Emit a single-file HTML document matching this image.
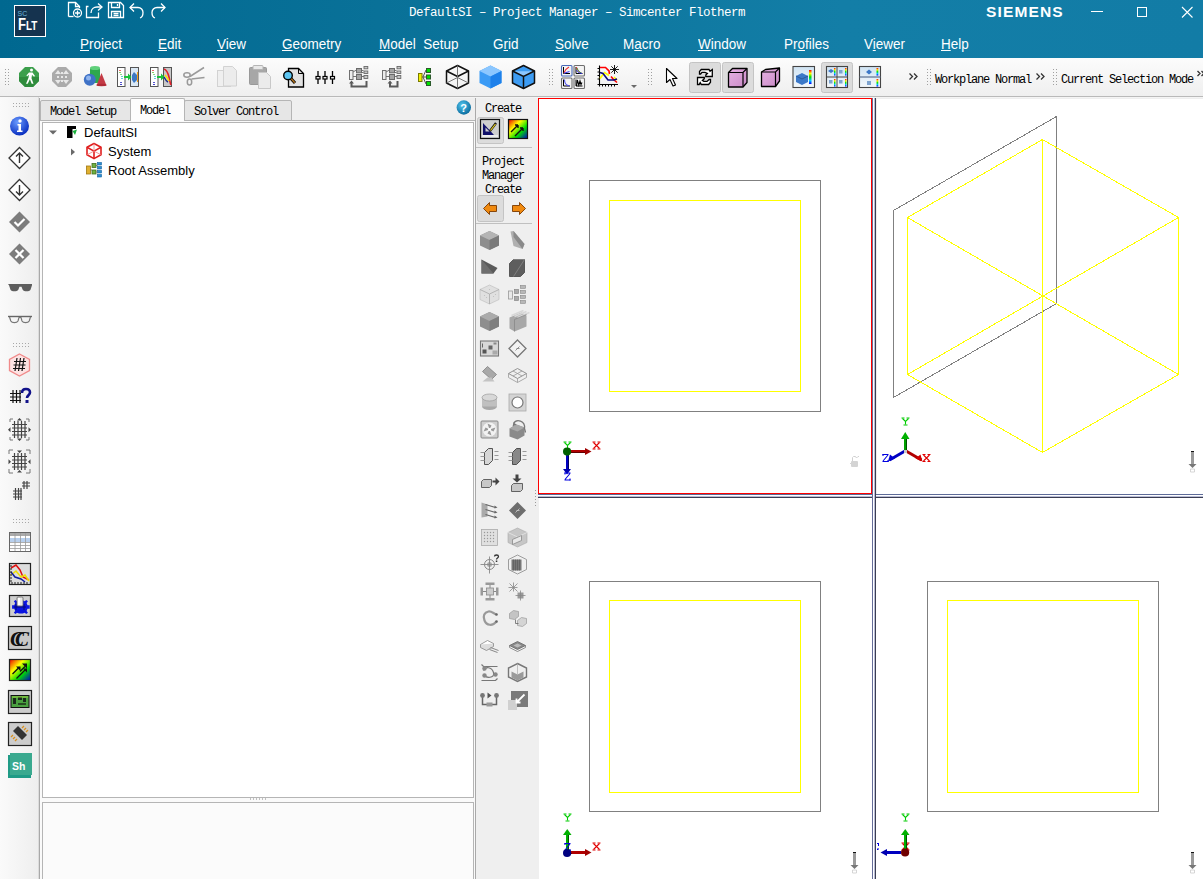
<!DOCTYPE html>
<html><head><meta charset="utf-8">
<style>
*{box-sizing:border-box;margin:0;padding:0}
html,body{width:1203px;height:879px;overflow:hidden;background:#f0f0f0;font-family:"Liberation Sans",sans-serif}
.a{position:absolute}
#title{left:0;top:0;width:1203px;height:58px;background:linear-gradient(90deg,#006890 0%,#0a7299 35%,#137ea7 70%,#127ca6 100%)}
.mono{font-family:"Liberation Mono",monospace}
.menu{color:#fff;font-size:14.5px;top:36px;white-space:nowrap;transform:scaleX(0.93);transform-origin:0 0}
.menu u{text-decoration:underline;text-decoration-thickness:1px;text-underline-offset:1px}
#tb{left:0;top:58px;width:1203px;height:38px;background:linear-gradient(#fcfcfc,#efefef)}
#tbline{left:0;top:96px;width:1203px;height:1px;background:#b9b9b9}
#tbline2{left:0;top:97px;width:1203px;height:1px;background:#f4f4f4}
#lt{left:0;top:97px;width:39px;height:782px;background:linear-gradient(90deg,#fafafa,#eeeeee)}
.vl{background:#a9a9a9}
#vp{left:538px;top:98px;width:665px;height:781px;background:#fff}
.tab{font-size:12px;letter-spacing:-1.2px;color:#000;white-space:nowrap}
.tree{font-size:13px;color:#000;white-space:nowrap}
.ctext{font-size:12px;letter-spacing:-1.2px;color:#000;white-space:nowrap}
</style></head><body>
<div id="title" class="a">
 <div class="a" style="left:14px;top:5px;width:32px;height:32px;border:1px solid #fff;background:#15334f"></div>
 <div class="a" style="left:17.5px;top:10px;font-size:7px;font-weight:normal;color:#6fb9dd;line-height:8px">SC</div>
 <div class="a" style="left:18px;top:17px;font-size:16px;font-weight:bold;color:#fff;line-height:16px;transform:scaleX(0.82);transform-origin:0 0">F<span style="font-size:12px">LT</span></div>
 <svg class="a" style="left:66px;top:0px" width="102" height="20" viewBox="0 0 102 20" fill="none" stroke="#fff" stroke-width="1.3">
  <path d="M2.5 16.5V2.5h7l4 4V8"/><path d="M9.5 2.5v4h4"/><path d="M2.5 16.5h5"/>
  <circle cx="11.5" cy="13" r="4"/><path d="M11.5 10.5v5M9 13h5"/>
  <path d="M22.5 6.5h-2v11h12v-5"/><path d="M25 13c0-4 3-6 6-6h4"/><path d="M32 3.5l4 3.5-4 3.5"/>
  <path d="M42.5 2.5h12l3 3v12h-15z"/><path d="M45.5 2.5v5h8v-5"/><path d="M45.5 17.5v-6h9v6"/><path d="M47.5 13.5h5M47.5 15.5h5"/><path d="M51.5 4v2"/>
  <path d="M64 7.5h8c3 0 5 2.5 5 5 0 3-1.5 5-3 5.5"/><path d="M68 3.5l-4 4 4 4"/>
  <path d="M99 7.5h-8c-3 0-5 2.5-5 5 0 3 1.5 5 3 5.5"/><path d="M95 3.5l4 4-4 4"/>
 </svg>
 <div class="a mono" style="left:409px;top:6px;font-size:12.5px;color:#fff;letter-spacing:-0.5px;white-space:nowrap">DefaultSI &#8211; Project Manager &#8211; Simcenter Flotherm</div>
 <div class="a" style="left:986px;top:4px;font-size:14px;font-weight:bold;color:#fff;letter-spacing:1px;transform:scaleX(1.11);transform-origin:0 0">SIEMENS</div>
 <div class="a" style="left:1091px;top:11px;width:12px;height:1px;background:#fff"></div>
 <div class="a" style="left:1137px;top:7px;width:10px;height:10px;border:1px solid #fff"></div>
 <svg class="a" style="left:1181px;top:6px" width="13" height="13"><path d="M1 1L11.5 11.5M11.5 1L1 11.5" stroke="#fff" stroke-width="1.1"/></svg>
 <div class="a menu" style="left:80px"><u>P</u>roject</div>
 <div class="a menu" style="left:158px"><u>E</u>dit</div>
 <div class="a menu" style="left:217px"><u>V</u>iew</div>
 <div class="a menu" style="left:282px"><u>G</u>eometry</div>
 <div class="a menu" style="left:379px;word-spacing:4px"><u>M</u>odel Setup</div>
 <div class="a menu" style="left:493px">G<u>r</u>id</div>
 <div class="a menu" style="left:555px"><u>S</u>olve</div>
 <div class="a menu" style="left:623px">M<u>a</u>cro</div>
 <div class="a menu" style="left:698px"><u>W</u>indow</div>
 <div class="a menu" style="left:784px">Pr<u>o</u>files</div>
 <div class="a menu" style="left:864px">V<u>i</u>ewer</div>
 <div class="a menu" style="left:941px"><u>H</u>elp</div>
</div>

<div id="tb" class="a"></div>
<svg class="a" style="left:0;top:58px" width="1203" height="38" viewBox="0 58 1203 38">
 <defs>
  <linearGradient id="gcub" x1="0" y1="0" x2="1" y2="1"><stop offset="0" stop-color="#8fc8ff"/><stop offset="1" stop-color="#1e88f0"/></linearGradient>
  <linearGradient id="pink" x1="0" y1="0" x2="1" y2="1"><stop offset="0" stop-color="#e7b2e4"/><stop offset="1" stop-color="#c98ac6"/></linearGradient>
  <linearGradient id="pan" x1="0" y1="0" x2="0" y2="1"><stop offset="0" stop-color="#cfe3f3"/><stop offset="1" stop-color="#f4f8fb"/></linearGradient>
  <linearGradient id="cbar" x1="0" y1="0" x2="0" y2="1"><stop offset="0" stop-color="#f00"/><stop offset="0.25" stop-color="#ff0"/><stop offset="0.5" stop-color="#0d0"/><stop offset="0.75" stop-color="#0cf"/><stop offset="1" stop-color="#00f"/></linearGradient>
 </defs>
 <!-- grips -->
 <rect x="5" y="69" width="1" height="1" fill="#a0a0a0"/><rect x="5" y="72" width="1" height="1" fill="#a0a0a0"/><rect x="5" y="75" width="1" height="1" fill="#a0a0a0"/><rect x="5" y="78" width="1" height="1" fill="#a0a0a0"/><rect x="5" y="81" width="1" height="1" fill="#a0a0a0"/><rect x="5" y="84" width="1" height="1" fill="#a0a0a0"/><rect x="8" y="69" width="1" height="1" fill="#a0a0a0"/><rect x="8" y="72" width="1" height="1" fill="#a0a0a0"/><rect x="8" y="75" width="1" height="1" fill="#a0a0a0"/><rect x="8" y="78" width="1" height="1" fill="#a0a0a0"/><rect x="8" y="81" width="1" height="1" fill="#a0a0a0"/><rect x="8" y="84" width="1" height="1" fill="#a0a0a0"/>
 <rect x="549" y="69" width="1" height="1" fill="#a0a0a0"/><rect x="549" y="72" width="1" height="1" fill="#a0a0a0"/><rect x="549" y="75" width="1" height="1" fill="#a0a0a0"/><rect x="549" y="78" width="1" height="1" fill="#a0a0a0"/><rect x="549" y="81" width="1" height="1" fill="#a0a0a0"/><rect x="549" y="84" width="1" height="1" fill="#a0a0a0"/><rect x="552" y="69" width="1" height="1" fill="#a0a0a0"/><rect x="552" y="72" width="1" height="1" fill="#a0a0a0"/><rect x="552" y="75" width="1" height="1" fill="#a0a0a0"/><rect x="552" y="78" width="1" height="1" fill="#a0a0a0"/><rect x="552" y="81" width="1" height="1" fill="#a0a0a0"/><rect x="552" y="84" width="1" height="1" fill="#a0a0a0"/>
 <rect x="648" y="69" width="1" height="1" fill="#a0a0a0"/><rect x="648" y="72" width="1" height="1" fill="#a0a0a0"/><rect x="648" y="75" width="1" height="1" fill="#a0a0a0"/><rect x="648" y="78" width="1" height="1" fill="#a0a0a0"/><rect x="648" y="81" width="1" height="1" fill="#a0a0a0"/><rect x="648" y="84" width="1" height="1" fill="#a0a0a0"/><rect x="651" y="69" width="1" height="1" fill="#a0a0a0"/><rect x="651" y="72" width="1" height="1" fill="#a0a0a0"/><rect x="651" y="75" width="1" height="1" fill="#a0a0a0"/><rect x="651" y="78" width="1" height="1" fill="#a0a0a0"/><rect x="651" y="81" width="1" height="1" fill="#a0a0a0"/><rect x="651" y="84" width="1" height="1" fill="#a0a0a0"/>
 <!-- 1 green octagon -->
 <path d="M25 67h8l6 6v8l-6 6h-8l-6-6v-8z" fill="#3c9f4c"/>
 <path d="M19 77h20v4l-6 6h-8l-6-6z" fill="#2f8c3d"/>
 <circle cx="31.5" cy="70" r="1.5" fill="#fff"/>
 <path d="M29 72.5h3.5l2.5 3.5-1 .8-2-2-.5 3.5 2 5.5h-1.8l-1.8-4.5-2.2 4.5h-1.7l2.5-6 .5-3-1.8 1.5-.8-.8z" fill="#fff"/>
 <!-- 2 gray octagon -->
 <path d="M58 67h8l6 6v8l-6 6h-8l-6-6v-8z" fill="#ababab"/>
 <path d="M55 74l3-4 3 4zM63 74l3-4 3 4zM55 80l3 4 3-4zM63 80l3 4 3-4z" fill="#e8e8e8"/>
 <rect x="61" y="72" width="2" height="2" fill="#e8e8e8"/><rect x="61" y="76" width="2" height="2" fill="#e8e8e8"/><rect x="57" y="76" width="2" height="2" fill="#e8e8e8"/><rect x="65" y="76" width="2" height="2" fill="#e8e8e8"/><rect x="61" y="80" width="2" height="2" fill="#e8e8e8"/>
 <!-- 3 shapes -->
 <rect x="90" y="67" width="10" height="16" rx="3" fill="#2ea84e"/><ellipse cx="95" cy="68" rx="5" ry="2" fill="#5fd07a"/>
 <circle cx="89.8" cy="79.8" r="6" fill="#3f72c6"/><circle cx="88.5" cy="78" r="2.5" fill="#8fb4ee"/>
 <path d="M101.5 73l5 12.5h-10z" fill="#c43a45"/><ellipse cx="101.5" cy="85" rx="5" ry="1.2" fill="#b02c38"/>
 <!-- 4 panels -->
 <rect x="117.5" y="67.5" width="7.5" height="19" fill="#fff" stroke="#555" stroke-width="1"/>
 <rect x="119" y="70" width="2" height="1" fill="#e66"/><rect x="119" y="72" width="2" height="1" fill="#8c6"/><rect x="120" y="74" width="2" height="1" fill="#8d8"/><rect x="121" y="76" width="2" height="1" fill="#6cc"/><rect x="121" y="78" width="2" height="1" fill="#6cd"/><rect x="120" y="82" width="2" height="1" fill="#55c"/><rect x="120" y="84" width="2" height="1" fill="#44c"/>
 <rect x="130.5" y="67.5" width="8" height="19" fill="#dbe8f4" stroke="#555" stroke-width="1"/>
 <path d="M124 76h4v-2.5l3.5 3.5-3.5 3.5v-2.5h-4z" fill="#19c23a"/>
 <path d="M134 72l3 3v5l-3 3-2-3v-5z" fill="#3d79c4"/><rect x="137" y="72" width="1" height="10" fill="#f0a020"/>
 <!-- 5 -->
 <rect x="150.5" y="67.5" width="7.5" height="19" fill="#fff" stroke="#555" stroke-width="1"/>
 <rect x="152" y="70" width="2" height="1" fill="#e66"/><rect x="152" y="72" width="2" height="1" fill="#8c6"/><rect x="153" y="74" width="2" height="1" fill="#8d8"/><rect x="154" y="76" width="2" height="1" fill="#6cc"/><rect x="154" y="78" width="2" height="1" fill="#6cd"/><rect x="153" y="82" width="2" height="1" fill="#55c"/><rect x="153" y="84" width="2" height="1" fill="#44c"/>
 <rect x="163.5" y="67.5" width="8" height="19" fill="#c8c8c8" stroke="#555" stroke-width="1"/>
 <path d="M157 76h4v-2.5l3.5 3.5-3.5 3.5v-2.5h-4z" fill="#19c23a"/>
 <path d="M164 69c3 1 4 4 5 8s1 6 2 8" stroke="#e0202a" stroke-width="1.6" fill="none"/><path d="M165 75c2 2 3 4 4 6" stroke="#ffe000" stroke-width="1.6" fill="none"/><path d="M164 77c1 2 2 4 4 5" stroke="#1b2a8a" stroke-width="1.4" fill="none"/>
 <!-- 6 scissors -->
 <g fill="none" stroke="#9a9a9a" stroke-width="1.5"><ellipse cx="187" cy="75" rx="3.2" ry="2.2"/><ellipse cx="189.5" cy="82" rx="2.2" ry="3"/><path d="M190 76.5l14-9M191.5 79l13-1.5"/></g>
 <!-- 7 copy -->
 <rect x="217.5" y="70.5" width="13" height="16" fill="#efefef" stroke="#d2d2d2"/><path d="M223.5 66.5h9l4 4v15.5h-13z" fill="#ececec" stroke="#d2d2d2"/>
 <!-- 8 paste -->
 <rect x="249.5" y="67.5" width="17" height="17" rx="1" fill="#a7a7a7" stroke="#999"/><rect x="253" y="65.5" width="10" height="4" rx="1" fill="#e8e8e8" stroke="#b5b5b5"/>
 <path d="M258.5 72.5h8l4 4v12h-12z" fill="#ebebeb" stroke="#c8c8c8"/>
 <!-- 9 magnifier doc -->
 <path d="M288.5 68.5h10l5 5v13.5h-15z" fill="#e2e2e2" stroke="#000" stroke-width="1.3"/><path d="M298.5 68.5v5h5" fill="none" stroke="#000"/>
 <circle cx="288" cy="75.5" r="4.3" fill="#5cc5f2" stroke="#000" stroke-width="1.4"/><path d="M291 78.5l4 4.5" stroke="#000" stroke-width="3"/><path d="M291.3 78.8l3.5 4" stroke="#b0701a" stroke-width="1.4"/>
 <!-- 10 sliders -->
 <g stroke="#000" stroke-width="1.3"><path d="M318 71v13M325 71v13M332.5 71v13"/></g>
 <g fill="#fff" stroke="#000" stroke-width="1.2"><rect x="316" y="76.5" width="4" height="2.5"/><rect x="323" y="76.5" width="4" height="2.5"/><rect x="330.5" y="76.5" width="4" height="2.5"/></g>
 <!-- 11 tree gray -->
 <g transform="translate(0 0)"><rect x="349.5" y="70.5" width="3.5" height="9" fill="#ececec" stroke="#707070"/><path d="M353 76.5h3.5M361.5 76.5h2.5M353 72l3.5-2M361.5 70.5h2M361.5 72.5h2" stroke="#666" stroke-width="0.9"/><rect x="356.5" y="68.5" width="5" height="4.3" fill="#a4a4a4" stroke="#6a6a6a"/><rect x="356.5" y="74.5" width="5" height="5" fill="#a4a4a4" stroke="#6a6a6a"/><rect x="364" y="66.5" width="3.8" height="2.3" fill="#c8c8c8" stroke="#6a6a6a" stroke-width="0.9"/><rect x="364" y="71" width="3.8" height="2.5" fill="#c8c8c8" stroke="#6a6a6a" stroke-width="0.9"/><rect x="364" y="75.5" width="3.8" height="3" fill="#c8c8c8" stroke="#6a6a6a" stroke-width="0.9"/><path d="M351.5 82.5v4h15v-5.5" fill="none" stroke="#5a5a5a" stroke-width="2"/><path d="M349 83.5l2.5-3 2.5 3z" fill="#5a5a5a"/></g>
 <g transform="translate(33 0)"><rect x="349.5" y="70.5" width="3.5" height="9" fill="#ececec" stroke="#707070"/><path d="M353 76.5h3.5M361.5 76.5h2.5M353 72l3.5-2M361.5 70.5h2M361.5 72.5h2" stroke="#666" stroke-width="0.9"/><rect x="356.5" y="68.5" width="5" height="4.3" fill="#a4a4a4" stroke="#6a6a6a"/><rect x="356.5" y="74.5" width="5" height="5" fill="#a4a4a4" stroke="#6a6a6a"/><rect x="364" y="66.5" width="3.8" height="2.3" fill="#c8c8c8" stroke="#6a6a6a" stroke-width="0.9"/><rect x="364" y="71" width="3.8" height="2.5" fill="#c8c8c8" stroke="#6a6a6a" stroke-width="0.9"/><rect x="364" y="75.5" width="3.8" height="3" fill="#c8c8c8" stroke="#6a6a6a" stroke-width="0.9"/><path d="M357 82.5v4h7.5v-5.5" fill="none" stroke="#5a5a5a" stroke-width="2"/><path d="M354.5 83.5l2.5-3 2.5 3z" fill="#5a5a5a"/></g>
 <!-- 12 yellow/green tree -->
 <path d="M422 77h4M423 77l3-7h1M423 77l3 7h1" stroke="#555" fill="none"/>
 <rect x="418.5" y="73.5" width="3.5" height="8" fill="#f3f000" stroke="#7a7a00"/>
 <rect x="426.5" y="68.5" width="4" height="4" fill="#00e000" stroke="#2a5a2a"/><rect x="426.5" y="75" width="4" height="4" fill="#00e000" stroke="#2a5a2a"/><rect x="426.5" y="81.5" width="4" height="4" fill="#00e000" stroke="#2a5a2a"/>
 <!-- 13 wire cube -->
 <g fill="none" stroke="#111" stroke-width="1.5" stroke-linejoin="round"><path d="M457.5 65.5l11 5.5v12l-11 5.5-11-5.5v-12z"/><path d="M446.5 71l11 5.5 11-5.5M457.5 76.5v0"/></g>
 <g fill="none" stroke="#777" stroke-width="1"><path d="M457.5 65.5v23M446.5 83l11-5.5 11 5.5"/></g>
 <!-- 14 blue cube -->
 <path d="M490.5 65.5l11 5.5v12l-11 5.5-11-5.5v-12z" fill="#3b9bf5"/><path d="M479.5 71l11-5.5 11 5.5-11 5.5z" fill="#8cc7ff"/><path d="M490.5 76.5v12l11-5.5v-12z" fill="#1d80ea"/>
 <!-- 15 blue cube black edges -->
 <path d="M523.5 65.5l11 5.5v12l-11 5.5-11-5.5v-12z" fill="#3d9cf3" stroke="#111" stroke-width="1.5" stroke-linejoin="round"/><path d="M513 71.2l10.5 5.3 10.5-5.3" fill="#8cc7ff"/><path d="M512.5 71l11 5.5 11-5.5M523.5 76.5v12" fill="none" stroke="#111" stroke-width="1.5"/>
 <!-- 16 4-plot -->
 <rect x="561.5" y="65.5" width="10.5" height="10.5" rx="1" fill="#f4f4f4" stroke="#4a6ab8" stroke-width="1.1"/><path d="M563.5 67V73.5H570" fill="none" stroke="#000" stroke-width="1"/><rect x="574.0" y="65.5" width="10.5" height="10.5" rx="1" fill="#f4f4f4" stroke="#6e6e6e" stroke-width="1.1"/><path d="M576.0 67V73.5H582.5" fill="none" stroke="#000" stroke-width="1"/><rect x="561.5" y="78.0" width="10.5" height="10.5" rx="1" fill="#f4f4f4" stroke="#6e6e6e" stroke-width="1.1"/><path d="M563.5 79.5V86.0H570" fill="none" stroke="#000" stroke-width="1"/><rect x="574.0" y="78.0" width="10.5" height="10.5" rx="1" fill="#f4f4f4" stroke="#6e6e6e" stroke-width="1.1"/><path d="M576.0 79.5V86.0H582.5" fill="none" stroke="#000" stroke-width="1"/><path d="M564 73c1-3 3-5 5-6" fill="none" stroke="#f03030" stroke-width="1.1"/><path d="M564 73.5c2-.5 3-1.5 5.5-2" fill="none" stroke="#4040f0" stroke-width="1.1"/><path d="M576.5 67c.5 3 2 5 5 6" fill="none" stroke="#e03030" stroke-width="1"/><path d="M577 68c1 2 1.5 4 4.5 5" fill="none" stroke="#30a030" stroke-width="0.9"/><path d="M576.5 70c1 2 2 3 5.5 3.5" fill="none" stroke="#3030e0" stroke-width="1"/><path d="M564.5 79.5c0 4 1 6 5 6.5" fill="none" stroke="#5050f0" stroke-width="1.1"/><path d="M576.5 86l.8-6 1.5 5 1.2-4 1 3.5 1-2" fill="none" stroke="#000" stroke-width="1.1"/>
 <!-- 17 chart star -->
 <g fill="none" stroke-linejoin="miter">
  <path d="M599.5 65.5V86.5M597.5 84.5H618" stroke="#000" stroke-width="1.1"/>
  <path d="M597.5 68.5h2M597.5 72h2M597.5 75.5h2M597.5 79h2M602.5 84.5v2M605.5 84.5v2M608.5 84.5v2M611.5 84.5v2M614.5 84.5v2" stroke="#000" stroke-width="1"/>
  <path d="M600 67.5H605.5L609 71L609.5 74M611 76.5L613.5 79.5L617 82.5" stroke="#ff0000" stroke-width="1.6"/>
  <path d="M600 78.5L604.5 72.5L609 75.5M614 77L617 80" stroke="#ffff00" stroke-width="1.6"/>
  <path d="M600 72.5L603 73.5L608 80H614L617 79" stroke="#0a0a80" stroke-width="1.6"/>
  <path d="M614.5 65v9M610 69.5h9M611.3 66.3l6.4 6.4M617.7 66.3l-6.4 6.4" stroke="#000" stroke-width="0.9"/>
 </g>
 <path d="M631 85h6l-3 3z" fill="#6a6a6a"/>
 <!-- 18 cursor -->
 <path d="M666.5 68.5v14l3.5-3 3 6.5 2.5-1-3-6.5h4.5z" fill="#fff" stroke="#000" stroke-width="1.1" stroke-linejoin="round"/>
 <!-- pressed buttons -->
 <rect x="689.5" y="62.5" width="31" height="30" rx="2" fill="#dcdcdc" stroke="#c4c4c4"/>
 <rect x="722.5" y="62.5" width="31" height="30" rx="2" fill="#dcdcdc" stroke="#c4c4c4"/>
 <rect x="821.5" y="62.5" width="31" height="30" rx="2" fill="#dcdcdc" stroke="#c4c4c4"/>
 <!-- 19 sync -->
 <path d="M699.5 71.5L701.3 69.5H709L710 71.3L712.3 69.5V76.5H705.8V75L707.4 73.4L705 72.3H702L700.6 74H699.5Z" fill="#fff" stroke="#000" stroke-width="1.3" stroke-linejoin="miter"/>
 <path d="M697.5 77.5H704.3V78.8L702.4 80.4L703.8 81.4H707L709.1 79.5H710.5V82.2L708.6 84.5H701.3L700.2 82.6L699.2 84.5H697.5Z" fill="#fff" stroke="#000" stroke-width="1.3" stroke-linejoin="miter"/>
 <!-- 20 pink cube pressed -->
 <path d="M728.5 72.5l4-4h14.5v14l-4 4.5h-14.5z" fill="url(#pink)" stroke="#000" stroke-width="1.3" stroke-linejoin="round"/><path d="M728.5 72.5h14.5l4-4M743 72.5v14" fill="none" stroke="#000" stroke-width="1.2"/>
 <!-- 21 pink cube 2 -->
 <path d="M761.5 72l4-2.5 14-1.5v13l-4 5.5h-14z" fill="url(#pink)" stroke="#000" stroke-width="1.3" stroke-linejoin="round"/><path d="M761.5 72h14l4-4M775.5 72v14.5" fill="none" stroke="#000" stroke-width="1.2"/>
 <!-- 22 blue panel -->
 <rect x="793" y="66.5" width="21.5" height="21" fill="url(#pan)" stroke="#444" stroke-width="1.1"/>
 <path d="M802 73l6 3v6l-6 3-6-3v-6z" fill="#3b78c8"/><path d="M796 76l6 3 6-3" fill="none" stroke="#2a5a9a"/>
 <rect x="809" y="70" width="2.5" height="14" fill="url(#cbar)"/>
 <!-- 23 4-view -->
 <rect x="826.5" y="66.5" width="21" height="21" fill="url(#pan)" stroke="#444" stroke-width="1.1"/><path d="M837 66.5v21M826.5 77h21" stroke="#444" stroke-width="1"/>
 <path d="M831 69l3 2-3 2-3-2z" fill="#3b78c8"/><rect x="839" y="70" width="3.5" height="3.5" fill="#7da3cf"/><rect x="829" y="80" width="3.5" height="3.5" fill="#7da3cf"/><rect x="839" y="80" width="3.5" height="3.5" fill="#7da3cf"/>
 <g fill="url(#cbar)"><rect x="834" y="68" width="1.5" height="7.5"/><rect x="845" y="68" width="1.5" height="7.5"/><rect x="834" y="79" width="1.5" height="7.5"/><rect x="845" y="79" width="1.5" height="7.5"/></g>
 <!-- 24 2-view -->
 <rect x="859.5" y="66.5" width="21" height="21" fill="url(#pan)" stroke="#444" stroke-width="1.1"/><path d="M859.5 77h21" stroke="#5a7090" stroke-width="1.2"/>
 <path d="M869 69.5l3 2.5-3 2.5-3-2.5z" fill="#3b78c8"/><rect x="867" y="81" width="4" height="4" fill="#7da3cf"/>
 <rect x="876.5" y="68" width="1.8" height="7.5" fill="url(#cbar)"/><rect x="876.5" y="79" width="1.8" height="7.5" fill="url(#cbar)"/>
 <!-- chevrons -->
 <g fill="none" stroke="#333" stroke-width="1.3"><path d="M909.5 73.5l3 3-3 3M914 73.5l3 3-3 3"/><path d="M1036.5 73.5l3 3-3 3M1041 73.5l3 3-3 3"/><path d="M1197.5 71l2.5 2.5-2.5 2.5M1201.5 71l2.5 2.5-2.5 2.5"/></g>
 <rect x="927" y="69" width="1" height="1" fill="#a0a0a0"/><rect x="927" y="72" width="1" height="1" fill="#a0a0a0"/><rect x="927" y="75" width="1" height="1" fill="#a0a0a0"/><rect x="927" y="78" width="1" height="1" fill="#a0a0a0"/><rect x="927" y="81" width="1" height="1" fill="#a0a0a0"/><rect x="927" y="84" width="1" height="1" fill="#a0a0a0"/><rect x="930" y="69" width="1" height="1" fill="#a0a0a0"/><rect x="930" y="72" width="1" height="1" fill="#a0a0a0"/><rect x="930" y="75" width="1" height="1" fill="#a0a0a0"/><rect x="930" y="78" width="1" height="1" fill="#a0a0a0"/><rect x="930" y="81" width="1" height="1" fill="#a0a0a0"/><rect x="930" y="84" width="1" height="1" fill="#a0a0a0"/>
 <rect x="1053" y="69" width="1" height="1" fill="#a0a0a0"/><rect x="1053" y="72" width="1" height="1" fill="#a0a0a0"/><rect x="1053" y="75" width="1" height="1" fill="#a0a0a0"/><rect x="1053" y="78" width="1" height="1" fill="#a0a0a0"/><rect x="1053" y="81" width="1" height="1" fill="#a0a0a0"/><rect x="1053" y="84" width="1" height="1" fill="#a0a0a0"/><rect x="1056" y="69" width="1" height="1" fill="#a0a0a0"/><rect x="1056" y="72" width="1" height="1" fill="#a0a0a0"/><rect x="1056" y="75" width="1" height="1" fill="#a0a0a0"/><rect x="1056" y="78" width="1" height="1" fill="#a0a0a0"/><rect x="1056" y="81" width="1" height="1" fill="#a0a0a0"/><rect x="1056" y="84" width="1" height="1" fill="#a0a0a0"/>
</svg>
<div class="a mono" style="left:935px;top:73px;font-size:12px;letter-spacing:-1.2px;color:#000;white-space:nowrap">Workplane Normal</div>
<div class="a mono" style="left:1061px;top:73px;font-size:12px;letter-spacing:-1.2px;color:#000;white-space:nowrap">Current Selection Mode</div>

<div id="tbline" class="a"></div>
<div id="tbline2" class="a"></div>
<div id="lt" class="a"></div>
<svg class="a" style="left:0;top:97px" width="39" height="782" viewBox="0 97 39 782">
 <defs>
  <radialGradient id="info" cx="0.4" cy="0.3" r="0.7"><stop offset="0" stop-color="#6a9cff"/><stop offset="1" stop-color="#0a2fc0"/></radialGradient>
  <linearGradient id="rain" x1="0" y1="0" x2="1" y2="1"><stop offset="0" stop-color="#e00"/><stop offset="0.35" stop-color="#ff0"/><stop offset="0.65" stop-color="#0d0"/><stop offset="1" stop-color="#00c"/></linearGradient>
  <pattern id="grip2" width="3" height="3" patternUnits="userSpaceOnUse"><rect width="1" height="1" fill="#b0b0b0"/></pattern>
 </defs>
 <rect x="38" y="97" width="1" height="782" fill="#dadada"/>
 <rect x="13" y="103" width="1" height="1" fill="#a8a8a8"/><rect x="13" y="106" width="1" height="1" fill="#a8a8a8"/><rect x="16" y="103" width="1" height="1" fill="#a8a8a8"/><rect x="16" y="106" width="1" height="1" fill="#a8a8a8"/><rect x="19" y="103" width="1" height="1" fill="#a8a8a8"/><rect x="19" y="106" width="1" height="1" fill="#a8a8a8"/><rect x="22" y="103" width="1" height="1" fill="#a8a8a8"/><rect x="22" y="106" width="1" height="1" fill="#a8a8a8"/><rect x="25" y="103" width="1" height="1" fill="#a8a8a8"/><rect x="25" y="106" width="1" height="1" fill="#a8a8a8"/><rect x="28" y="103" width="1" height="1" fill="#a8a8a8"/><rect x="28" y="106" width="1" height="1" fill="#a8a8a8"/>
 <rect x="13" y="343" width="1" height="1" fill="#a8a8a8"/><rect x="13" y="346" width="1" height="1" fill="#a8a8a8"/><rect x="16" y="343" width="1" height="1" fill="#a8a8a8"/><rect x="16" y="346" width="1" height="1" fill="#a8a8a8"/><rect x="19" y="343" width="1" height="1" fill="#a8a8a8"/><rect x="19" y="346" width="1" height="1" fill="#a8a8a8"/><rect x="22" y="343" width="1" height="1" fill="#a8a8a8"/><rect x="22" y="346" width="1" height="1" fill="#a8a8a8"/><rect x="25" y="343" width="1" height="1" fill="#a8a8a8"/><rect x="25" y="346" width="1" height="1" fill="#a8a8a8"/><rect x="28" y="343" width="1" height="1" fill="#a8a8a8"/><rect x="28" y="346" width="1" height="1" fill="#a8a8a8"/>
 <rect x="13" y="519" width="1" height="1" fill="#a8a8a8"/><rect x="13" y="522" width="1" height="1" fill="#a8a8a8"/><rect x="16" y="519" width="1" height="1" fill="#a8a8a8"/><rect x="16" y="522" width="1" height="1" fill="#a8a8a8"/><rect x="19" y="519" width="1" height="1" fill="#a8a8a8"/><rect x="19" y="522" width="1" height="1" fill="#a8a8a8"/><rect x="22" y="519" width="1" height="1" fill="#a8a8a8"/><rect x="22" y="522" width="1" height="1" fill="#a8a8a8"/><rect x="25" y="519" width="1" height="1" fill="#a8a8a8"/><rect x="25" y="522" width="1" height="1" fill="#a8a8a8"/><rect x="28" y="519" width="1" height="1" fill="#a8a8a8"/><rect x="28" y="522" width="1" height="1" fill="#a8a8a8"/>
 <!-- info -->
 <circle cx="19.5" cy="126" r="9.5" fill="url(#info)"/><circle cx="20" cy="121" r="1.7" fill="#fff"/><path d="M17.5 124h3.5v6.5h1.5v1.5h-5.5v-1.5h1.5v-5h-1z" fill="#fff"/>
 <!-- up / down diamonds -->
 <path d="M19.5 147.5l10.5 10.5-10.5 10.5-10.5-10.5z" fill="#fff" stroke="#333" stroke-width="1.3"/><path d="M19.5 153v10M16 156.5l3.5-3.5 3.5 3.5" fill="none" stroke="#333" stroke-width="1.4"/>
 <path d="M19.5 179.5l10.5 10.5-10.5 10.5-10.5-10.5z" fill="#fff" stroke="#333" stroke-width="1.3"/><path d="M19.5 185v10M16 191.5l3.5 3.5 3.5-3.5" fill="none" stroke="#333" stroke-width="1.4"/>
 <!-- check / x -->
 <path d="M19.5 211.5l10.5 10.5-10.5 10.5-10.5-10.5z" fill="#7c7c7c"/><path d="M14.5 222l3.5 3.5 6.5-6.5" fill="none" stroke="#fff" stroke-width="2.2"/>
 <path d="M19.5 243.5l10.5 10.5-10.5 10.5-10.5-10.5z" fill="#7c7c7c"/><path d="M15.5 250l8 8M23.5 250l-8 8" fill="none" stroke="#fff" stroke-width="2.2"/>
 <!-- sunglasses -->
 <path d="M8 284h24v1.2l-1.5 4.5c-1.2 2.2-6.5 2.2-7.8 0l-1.2-3h-2l-1.2 3c-1.3 2.2-6.6 2.2-7.8 0l-1.5-4.5z" fill="#5e5e5e"/>
 <!-- glasses -->
 <path d="M8 316.5h24" stroke="#666" stroke-width="1.4"/><path d="M9.5 317l1.3 4c1.2 2.2 6 2.2 7.2 0l1-3.5h2l1 3.5c1.2 2.2 6 2.2 7.2 0l1.3-4" fill="none" stroke="#777" stroke-width="1.2"/>
 <!-- red mesh cube -->
 <path d="M19.5 354l10 5.5v11l-10 5.5-10-5.5v-11z" fill="#fde3e3" stroke="#f08a8a" stroke-width="1.3"/>
 <g stroke="#111" stroke-width="1.2"><path d="M14 361.5h12M13.5 365h12M13 368.5h12M17 358l-2 13M20.5 358l-2 13M24 358l-2 13"/></g>
 <!-- #? -->
 <g stroke="#111" stroke-width="1.2"><path d="M10 393.5h11M10 397h11M10 400.5h11M13 390v13M16.5 390v13M20 390v13"/></g>
 <path d="M22 393c0-3 1.5-4 4-4s4 1 4 3.5c0 2.5-3 3-3 5.5" fill="none" stroke="#12128a" stroke-width="2.6"/><rect x="25.5" y="400" width="3" height="3" fill="#12128a"/>
 <!-- grid1 -->
 <g stroke="#444" stroke-width="1.2"><path d="M12 424.5h15M12 428h15M12 431.5h15M12 435h15M14.5 421v17M18 421v17M21.5 421v17M25 421v17"/></g>
 <path d="M19.5 418l-2.5 2.5h5zM19.5 441l-2.5-2.5h5zM8 429.7l2.5-2.5v5zM31 429.7l-2.5-2.5v5z" fill="#444"/>
 <path d="M10 422v-3h3M26 419h3v3M10 437v3h3M26 440h3v-3" fill="none" stroke="#777"/>
 <!-- grid2 -->
 <g stroke="#444" stroke-width="1.2"><path d="M12 456.5h15M12 460h15M12 463.5h15M12 467h15M14.5 453v17M18 453v17M21.5 453v17M25 453v17"/></g>
 <path d="M19.5 453l-2.5-2.5h5zM19.5 470l-2.5 2.5h5zM11 461.7l-2.5-2.5v5zM28 461.7l2.5-2.5v5z" fill="#444"/>
 <path d="M9 454v-4h4M26 450h4v4M9 469v4h4M26 473h4v-4" fill="none" stroke="#777"/>
 <!-- small grids -->
 <g stroke="#444" stroke-width="1.2"><path d="M13 491h9M13 494h9M13 497h9M15.5 488v12M18.5 488v12M21 488v12M22 486h8M22 483h8M24 481v8M27 481v8"/></g>
 <!-- table -->
 <rect x="9.5" y="532.5" width="21" height="19" fill="#fff" stroke="#666"/><rect x="10" y="533" width="20" height="3" fill="#aaa"/><rect x="10" y="538" width="20" height="4" fill="#b8d0ee"/>
 <g stroke="#999" stroke-width="0.8"><path d="M15 533v18M20.5 533v18M25.5 533v18M10 542.5h20M10 545.5h20M10 548.5h20"/></g>
 <!-- chart -->
 <rect x="9.5" y="563.5" width="21" height="21" fill="#ddd" stroke="#222" stroke-width="1.2"/><path d="M11 568l5-3 4 5 3 7 6 3" fill="none" stroke="#e01010" stroke-width="1.5"/><path d="M11 575l5-4 5 6 4-2 4 6" fill="none" stroke="#f0e000" stroke-width="1.5"/><path d="M11 572l4 5 6 2 4 3" fill="none" stroke="#1020a0" stroke-width="1.5"/><path d="M11 565v18h18" fill="none" stroke="#222" stroke-dasharray="2 1"/>
 <!-- gear -->
 <rect x="9.5" y="595.5" width="21" height="21" fill="#cfcfcf" stroke="#222" stroke-width="1.2"/>
 <g transform="translate(20 607) scale(0.88) translate(-20 -606)"><path d="M11 604h2.5l1-2.5-1.5-2 2-1.5 1.5 1.5 2-1h5l2 1 1.5-1.5 2 1.5-1.5 2 1 2.5h2.5v4h-2.5l-1 2.5 1.5 2-2 1.5-1.5-1.5-2.5 1h-4l-2.5-1-1.5 1.5-2-1.5 1.5-2-1-2.5h-2.5z" fill="#0a14e0"/></g>
 <path d="M14 607h12M16 604v6M24 604v6" stroke="#05087a" stroke-width="1"/>
 <rect x="17" y="597" width="6" height="9" rx="1" fill="#e8e8e8" stroke="#666" stroke-width="0.8"/><rect x="18" y="598" width="2" height="7" fill="#fff"/>
 <!-- CC -->
 <rect x="8.5" y="626.5" width="23" height="23" fill="#c8c8c8" stroke="#222" stroke-width="1.2"/>
 <text x="10" y="646" font-family="Liberation Serif" font-style="italic" font-weight="bold" font-size="21" fill="#111">C</text><text x="15" y="646" font-family="Liberation Serif" font-style="italic" font-weight="bold" font-size="21" fill="#111">C</text>
 <!-- rainbow -->
 <rect x="9.5" y="659.5" width="21" height="21" fill="url(#rain)" stroke="#222" stroke-width="1.2"/><path d="M12.5 674l6-6M16.5 678.5l9-9M20 671.5l5-5" fill="none" stroke="#111" stroke-width="1.3"/><path d="M16 666.5h4.5v4.5zM22 663.5h5v5zM23 668.5h4v4z" fill="#111"/>
 <!-- PCB -->
 <rect x="8.5" y="690.5" width="23" height="23" fill="#ccc" stroke="#222" stroke-width="1.2"/><rect x="11" y="695.5" width="18" height="12" fill="#4aa040" stroke="#111"/><rect x="13" y="698" width="3" height="6" fill="#1a2a1a"/><rect x="18" y="697" width="4" height="3" fill="#1a2a1a"/><rect x="23" y="698" width="3" height="4" fill="#1a2a1a"/><path d="M18 704h8" stroke="#111" stroke-width="1.2"/><path d="M12 697h16" stroke="#b0e040" stroke-width="0.8"/>
 <!-- chip -->
 <rect x="8.5" y="722.5" width="23" height="23" fill="#ccc" stroke="#222" stroke-width="1.2"/><path d="M13 731l5-5 9 9-5 5z" fill="#333"/><g stroke="#d89020" stroke-width="1.3"><path d="M13 735l-2 2M15 737l-2 2M17 739l-2 2M22 728l2-2M24 730l2-2M26 732l2-2"/></g>
 <!-- Sh -->
 <rect x="8" y="755" width="23" height="23" fill="#1f9b86"/><rect x="10" y="753" width="22" height="22" fill="#3aa98f"/>
 <text x="12" y="770" font-family="Liberation Sans" font-weight="bold" font-size="10.5" fill="#fff">Sh</text>
</svg>

<div class="a" style="left:38px;top:98px;width:1px;height:781px;background:#dcdcdc"></div>
<div class="a" style="left:39px;top:98px;width:1px;height:781px;background:#a9a9a9"></div>
<div class="a" style="left:40px;top:98px;width:435px;height:781px;background:#fafafa"></div>
<div class="a" style="left:40px;top:98px;width:435px;height:22px;background:#efefef"></div>
<div class="a" style="left:40px;top:120px;width:435px;height:1px;background:#b5b5b5"></div>
<div class="a" style="left:475px;top:98px;width:1px;height:781px;background:#a9a9a9"></div>
<!-- tabs -->
<div class="a" style="left:40px;top:100px;width:91px;height:21px;background:#e6e6e6;border:1px solid #b5b5b5;border-radius:2px 2px 0 0"></div>
<div class="a" style="left:184px;top:100px;width:108px;height:21px;background:#e6e6e6;border:1px solid #b5b5b5;border-radius:2px 2px 0 0"></div>
<div class="a" style="left:130px;top:98px;width:55px;height:23px;background:#fdfdfd;border:1px solid #b5b5b5;border-bottom:none;border-radius:2px 2px 0 0"></div>
<div class="a mono tab" style="left:50px;top:105px">Model Setup</div>
<div class="a mono tab" style="left:140px;top:104px">Model</div>
<div class="a mono tab" style="left:194px;top:105px">Solver Control</div>
<!-- help -->
<svg class="a" style="left:455px;top:99px" width="18" height="18"><defs><radialGradient id="hlp" cx="0.4" cy="0.35" r="0.7"><stop offset="0" stop-color="#54c6ef"/><stop offset="1" stop-color="#06679a"/></radialGradient></defs><circle cx="8.8" cy="8.5" r="7.2" fill="url(#hlp)"/><text x="5.2" y="13" font-family="Liberation Sans" font-weight="bold" font-size="11" fill="#fff">?</text></svg>
<!-- tree pane -->
<div class="a" style="left:42px;top:122px;width:432px;height:676px;background:#fff;border:1px solid #b5b5b5"></div>
<div class="a" style="left:42px;top:802px;width:432px;height:90px;background:#fbfbfb;border:1px solid #b5b5b5"></div>
<div class="a" style="left:250px;top:798px;width:17px;height:2px;background:repeating-linear-gradient(90deg,#c0c0c0 0 1px,transparent 1px 3px)"></div>
<!-- tree items -->
<svg class="a" style="left:46px;top:124px" width="60" height="56" viewBox="46 124 60 56">
 <path d="M49 130.5h8l-4 4z" fill="#6a6a6a"/>
 <path d="M67 126h9v3h-3.5v9h-5.5z" fill="#000"/><path d="M72.5 131l4.5-1.5-2 5.5z" fill="#19b03a"/>
 <path d="M71 148.5l4 3.5-4 3.5z" fill="#6a6a6a"/>
 <g fill="none" stroke="#e02020" stroke-width="1.6" stroke-linejoin="round"><path d="M94 143.5l7 3.8v7.5l-7 3.8-7-3.8v-7.5z"/><path d="M87 147.3l7 3.8 7-3.8M94 151.1v7.3"/></g>
 <g fill="none" stroke="#f08080" stroke-width="0.8"><path d="M94 143.5v7.6M87 154.8l7-3.7 7 3.7"/></g>
 <rect x="86.5" y="166" width="4" height="8" fill="#e0b030" stroke="#a07810" stroke-width="0.8"/>
 <rect x="92" y="163.5" width="4" height="4" fill="#70b040" stroke="#407020" stroke-width="0.8"/><rect x="92" y="170" width="4" height="4" fill="#70b040" stroke="#407020" stroke-width="0.8"/>
 <rect x="97.5" y="162.5" width="4" height="2.5" fill="#3090d0" stroke="#1060a0" stroke-width="0.6"/><rect x="97.5" y="166.5" width="4" height="2.5" fill="#3090d0" stroke="#1060a0" stroke-width="0.6"/><rect x="97.5" y="170.5" width="4" height="2.5" fill="#3090d0" stroke="#1060a0" stroke-width="0.6"/><rect x="97.5" y="174.5" width="4" height="2.5" fill="#3090d0" stroke="#1060a0" stroke-width="0.6"/>
 <path d="M90.5 170h1.5M96 165.5h1.5M96 172h1.5" stroke="#666" stroke-width="0.8"/>
</svg>
<div class="a tree" style="left:84px;top:125px">DefaultSI</div>
<div class="a tree" style="left:108px;top:144px">System</div>
<div class="a tree" style="left:108px;top:163px">Root Assembly</div>

<svg class="a" style="left:476px;top:98px" width="62" height="781" viewBox="476 98 62 781">
 <defs><linearGradient id="rain2" x1="0" y1="0" x2="1" y2="1"><stop offset="0" stop-color="#e00"/><stop offset="0.35" stop-color="#ff0"/><stop offset="0.65" stop-color="#0d0"/><stop offset="1" stop-color="#00c"/></linearGradient></defs>
 <rect x="476" y="98" width="62" height="781" fill="#efefef"/>
 <rect x="477.5" y="117.5" width="26" height="26" rx="2" fill="#dcdcdc" stroke="#c4c4c4"/>
 <rect x="480.5" y="119.5" width="19" height="19" fill="#cfcfcf" stroke="#111" stroke-width="1.2"/>
 <path d="M483 135v-12l11 12z" fill="#10106a"/><path d="M485.5 131.5v-4l4 4z" fill="#cfcfcf"/><path d="M482 136h16" stroke="#fff" stroke-width="1.2"/><path d="M490 131l6-8" stroke="#111" stroke-width="2.4"/><path d="M490.5 130.5l5-6.5" stroke="#e8d020" stroke-width="1.2"/>
 <rect x="508.5" y="119.5" width="19" height="19" fill="url(#rain2)" stroke="#111" stroke-width="1.2"/>
 <path d="M511 132l7-7M515 136l8-8M518 125h-3M518 125v3M523 128h-3M523 128v3" fill="none" stroke="#111" stroke-width="1.4"/>
 <rect x="475" y="147" width="57" height="1" fill="#c0c0c0"/>
 <rect x="477.5" y="195.5" width="26" height="26" rx="2" fill="#dcdcdc" stroke="#c4c4c4"/>
 <path d="M483.5 208.5l6-6v3h7v6h-7v3z" fill="#f08a10" stroke="#7a3a00" stroke-width="0.9" stroke-linejoin="round"/>
 <path d="M525.5 208.5l-6-6v3h-7v6h7v3z" fill="#f08a10" stroke="#7a3a00" stroke-width="0.9" stroke-linejoin="round"/>
 <rect x="475" y="223" width="57" height="1" fill="#c0c0c0"/>
 <rect x="535" y="490" width="1" height="1" fill="#9a9a9a"/><rect x="535" y="493" width="1" height="1" fill="#9a9a9a"/><rect x="535" y="496" width="1" height="1" fill="#9a9a9a"/><rect x="535" y="499" width="1" height="1" fill="#9a9a9a"/><rect x="535" y="502" width="1" height="1" fill="#9a9a9a"/><rect x="535" y="505" width="1" height="1" fill="#9a9a9a"/>
<g transform="translate(489.5 240.5)"><path d="M0-9.5l9.5 4.5v10l-9.5 4.5-9.5-4.5v-10z" fill="#8e8e8e"/><path d="M-9.5-5l9.5-4.5 9.5 4.5-9.5 4.5z" fill="#b4b4b4"/><path d="M0-.5v10l9.5-4.5v-10z" fill="#7a7a7a"/></g>
<g transform="translate(517.5 240.5)"><path d="M-7-9l3-.5 11 13-2 5-9-3z" fill="#b0b0b0"/><path d="M-4-9.5l11 13-2 5-9-12z" fill="#8a8a8a"/></g>
<g transform="translate(489.5 267.5)"><path d="M-8-8l16 8.5-4 5.5h-12z" fill="#5a5a5a"/><path d="M-8-8l12 14h-12z" fill="#6e6e6e"/></g>
<g transform="translate(517.5 267.5)"><path d="M-4-8h11v13l-4 4h-11v-13z" fill="#5e5e5e" stroke="#444" stroke-width="0.8"/><path d="M-4-8l11 0-11 17" fill="none" stroke="#888" stroke-width="0.8"/></g>
<g transform="translate(489.5 294.5)"><path d="M0-9.5l9.5 4.5v10l-9.5 4.5-9.5-4.5v-10z" fill="#e0e0e0" stroke="#bbb" stroke-width="0.6"/><path d="M-9.5-5l9.5 4.5 9.5-4.5M0-.5v10" fill="none" stroke="#aaa" stroke-width="0.8"/><g fill="#bdbdbd"><circle cx="-5" cy="1" r=".6"/><circle cx="-3" cy="3" r=".6"/><circle cx="4" cy="2" r=".6"/><circle cx="6" cy="0" r=".6"/><circle cx="0" cy="-5" r=".6"/></g></g>
<g transform="translate(517.5 294.5)"><rect x="-9" y="-3.5" width="4" height="8" fill="#e8e8e8" stroke="#999" stroke-width="0.8"/><rect x="-3" y="-5" width="4" height="4" fill="#aaa" stroke="#888" stroke-width="0.7"/><rect x="-3" y="2" width="4" height="4" fill="#aaa" stroke="#888" stroke-width="0.7"/><g fill="#b8b8b8" stroke="#888" stroke-width="0.6"><rect x="3" y="-9" width="5" height="2.8"/><rect x="3" y="-4" width="5" height="2.8"/><rect x="3" y="1" width="5" height="2.8"/><rect x="3" y="6" width="5" height="2.8"/></g></g>
<g transform="translate(489.5 321.5)"><path d="M0-9.5l9.5 4.5v10l-9.5 4.5-9.5-4.5v-10z" fill="#8e8e8e"/><path d="M-9.5-5l9.5-4.5 9.5 4.5-9.5 4.5z" fill="#ababab"/><path d="M0-.5v10l9.5-4.5v-10z" fill="#7e7e7e"/></g>
<g transform="translate(517.5 321.5)"><path d="M-8-4l12-5 5 3v11l-12 5-5-3z" fill="#a8a8a8"/><path d="M-6-6l12-5M-3-5l12-5M0-4l12-5" stroke="#d8d8d8" stroke-width="1.5"/><path d="M-3 10V-2l12-5" fill="none" stroke="#888" stroke-width="0.8"/></g>
<g transform="translate(489.5 348.5)"><rect x="-9" y="-7.5" width="18" height="15" fill="#d8d8d8" stroke="#777" stroke-width="1.1"/><rect x="-7" y="1" width="4" height="4" fill="#555"/><rect x="-1" y="-3" width="4" height="4" fill="#666"/><rect x="4" y="-6" width="3" height="2" fill="#888"/><rect x="3" y="2" width="5" height="4" fill="#aaa"/><path d="M-7-5v4" stroke="#666"/></g>
<g transform="translate(517.5 348.5)"><path d="M0-8.5l8.5 8.5-8.5 8.5-8.5-8.5z" fill="#f2f2f2" stroke="#777" stroke-width="1.3"/><path d="M-2 2l4-4M-1 0h3" stroke="#777" stroke-width="0.8"/></g>
<g transform="translate(489.5 375.5)"><path d="M-7-4l5-5 9 8-5 5z" fill="#a9a9a9" stroke="#777" stroke-width="0.7"/><path d="M-7 6h12l-3-4h-4z" fill="#c4c4c4"/></g>
<g transform="translate(517.5 375.5)"><path d="M-9-2l9-5 9 5-9 5z" fill="none" stroke="#888" stroke-width="0.9"/><path d="M-9-2v4l9 5 9-5v-4M0 3v4M-4.5-4.5l9 5M4.5-4.5l-9 5" fill="none" stroke="#999" stroke-width="0.8"/></g>
<g transform="translate(489.5 402.5)"><ellipse cx="0" cy="4" rx="7.5" ry="3.5" fill="#a8a8a8"/><rect x="-7.5" y="-5" width="15" height="9" fill="#c0c0c0"/><ellipse cx="0" cy="-5" rx="7.5" ry="3.5" fill="#d8d8d8" stroke="#999" stroke-width="0.7"/></g>
<g transform="translate(517.5 402.5)"><rect x="-8.5" y="-8.5" width="17" height="17" fill="#d4d4d4" stroke="#aaa" stroke-width="0.8"/><circle r="5.5" fill="#fff" stroke="#777" stroke-width="1.2"/></g>
<g transform="translate(489.5 429.5)"><rect x="-8.5" y="-8.5" width="17" height="17" rx="1" fill="#cfcfcf" stroke="#888" stroke-width="1"/><circle r="7" fill="#f2f2f2"/><path d="M0 0l-2-6 4 2zM0 0l6-2-2 4zM0 0l2 6-4-2zM0 0l-6 2 2-4z" fill="#999"/><circle r="1.5" fill="#fff"/></g>
<g transform="translate(517.5 429.5)"><path d="M-8-1l7-4 8 3v8l-7 4-8-3z" fill="#8a8a8a"/><path d="M-8-1l7-4 8 3-7 4z" fill="#a8a8a8"/><path d="M-4-6c3-5 12-3 11 5l1 4" fill="none" stroke="#777" stroke-width="1.3"/><path d="M-5-3l1-4 3 2z" fill="#777"/></g>
<g transform="translate(489.5 456.5)"><path d="M-5-4l4-4h4v12l-4 4h-4z" fill="#d6d6d6" stroke="#444" stroke-width="0.9"/><g stroke="#999" stroke-width="1" fill="#aaa"><path d="M-9-4h4M-9 0h4M-9 4h4M5-5h4M5-1h4M5 3h4"/></g></g>
<g transform="translate(517.5 456.5)"><path d="M-5-4l4-4h4v12l-4 4h-4z" fill="#888" stroke="#444" stroke-width="0.9"/><g stroke="#999" stroke-width="1"><path d="M-9-4h4M-9 0h4M-9 4h4M5-5h4M5-1h4M5 3h4"/></g></g>
<g transform="translate(489.5 483.5)"><path d="M-8-2l2-2h8v6l-2 2h-8z" fill="#c8c8c8" stroke="#555" stroke-width="0.9"/><path d="M3-3h3v-3l4 4-4 4v-3h-3z" fill="#444"/></g>
<g transform="translate(517.5 483.5)"><path d="M-6 2l2-2h9v6l-2 2h-9z" fill="#c8c8c8" stroke="#555" stroke-width="0.9"/><path d="M-2-9h3v4h3l-4.5 4-4.5-4h3z" fill="#444"/></g>
<g transform="translate(489.5 510.5)"><path d="M-8-8l6 2v12l-6 1z" fill="#aaa"/><path d="M-4-6l10 3M-4-1l10 3M-4 4l10 3" stroke="#666" stroke-width="1.3"/><path d="M5-5l3 2-3 1zM5 0l3 2-3 1zM5 5l3 2-3 1z" fill="#666"/></g>
<g transform="translate(517.5 510.5)"><path d="M0-8.5l8.5 8.5-8.5 8.5-8.5-8.5z" fill="#6e6e6e"/><path d="M-2 2l4-4M-1 0h3" stroke="#ccc" stroke-width="0.8"/></g>
<g transform="translate(489.5 537.5)"><rect x="-8" y="-8" width="16" height="16" fill="#e0e0e0" stroke="#aaa" stroke-width="0.8"/><g fill="#999"><circle cx="-5" cy="-5" r=".7"/><circle cx="-2" cy="-5" r=".7"/><circle cx="1" cy="-5" r=".7"/><circle cx="4" cy="-5" r=".7"/><circle cx="-5" cy="-2" r=".7"/><circle cx="-2" cy="-2" r=".7"/><circle cx="1" cy="-2" r=".7"/><circle cx="4" cy="-2" r=".7"/><circle cx="-5" cy="1" r=".7"/><circle cx="-2" cy="1" r=".7"/><circle cx="1" cy="1" r=".7"/><circle cx="4" cy="1" r=".7"/><circle cx="-5" cy="4" r=".7"/><circle cx="-2" cy="4" r=".7"/><circle cx="1" cy="4" r=".7"/><circle cx="4" cy="4" r=".7"/></g></g>
<g transform="translate(517.5 537.5)"><path d="M0-9.5l9.5 4.5v10l-9.5 4.5-9.5-4.5v-10z" fill="#c6c6c6" stroke="#aaa" stroke-width="0.6"/><path d="M-9.5-5l9.5 4.5 9.5-4.5" fill="none" stroke="#e0e0e0"/><path d="M-5 2l9-4v5l-9 4z" fill="#e8e8e8" stroke="#888" stroke-width="0.8"/></g>
<g transform="translate(489.5 564.5)"><circle r="5" fill="none" stroke="#888" stroke-width="1"/><circle r="2.5" fill="#aaa"/><path d="M-9 0h18M0-8v17" stroke="#888" stroke-width="0.9"/><path d="M5-8c0-2 4-2 4 0 0 1.5-2 1.5-2 3" fill="none" stroke="#333" stroke-width="1.3"/><rect x="6.3" y="-4" width="1.5" height="1.5" fill="#333"/></g>
<g transform="translate(517.5 564.5)"><path d="M0-9.5l9 4.5v10l-9 4.5-9-4.5v-10z" fill="none" stroke="#888" stroke-width="0.8"/><rect x="-6" y="-5" width="10" height="11" fill="#777"/><path d="M-4-5v11M-2-5v11M0-5v11M2-5v11" stroke="#555" stroke-width="0.6"/></g>
<g transform="translate(489.5 591.5)"><rect x="-3" y="-3.5" width="7" height="7" fill="#ccc" stroke="#888" stroke-width="0.8"/><rect x="-4" y="-9" width="9" height="2.5" fill="#999"/><rect x="-4" y="6.5" width="9" height="2.5" fill="#999"/><rect x="-9" y="-4" width="2.5" height="8" fill="#999"/><rect x="6.5" y="-4" width="2.5" height="8" fill="#999"/><path d="M.5-6.5v3M.5 3.5v3M-6.5 0h3.5M4 0h2.5" stroke="#888"/></g>
<g transform="translate(517.5 591.5)"><path d="M-8-8l8 8M-8 0l8-8M-4-9v9M-9-4h9" stroke="#888" stroke-width="0.8"/><rect x="0" y="1" width="6" height="6" fill="#999"/><path d="M3-1v10M-2 4h10" stroke="#888" stroke-width="0.8"/></g>
<g transform="translate(489.5 618.5)"><path d="M7 3c-4 5-10 4-12-1s0-8 4-9c3-.5 5 2 8 3" fill="none" stroke="#999" stroke-width="2.2"/><circle cx="7" cy="3" r="1.3" fill="#666"/><circle cx="7" cy="-4" r="1.3" fill="#666"/></g>
<g transform="translate(517.5 618.5)"><path d="M-8-5l4-3 5 1v5l-4 3-5-1z" fill="#c4c4c4" stroke="#999" stroke-width="0.7"/><path d="M0 2l4-3 5 1v5l-4 3-5-1z" fill="#d4d4d4" stroke="#999" stroke-width="0.7"/><path d="M-2 1v4h3" fill="none" stroke="#666" stroke-width="0.8"/></g>
<g transform="translate(489.5 645.5)"><path d="M-9-1l7-4 6 3-7 4z" fill="#fff" stroke="#888" stroke-width="0.8"/><path d="M-9-1v3l6 3 7-4v-3" fill="#ddd" stroke="#888" stroke-width="0.8"/><path d="M1 2l8 3M0 4l8 3" stroke="#888" stroke-width="1"/></g>
<g transform="translate(517.5 645.5)"><path d="M-8 0l8-4 8 4-8 4z" fill="#888" stroke="#666" stroke-width="0.8"/><path d="M-4 0l4-2 4 2-4 2z" fill="#bbb"/><path d="M-8 0v2l8 4 8-4v-2" fill="none" stroke="#777" stroke-width="0.8"/></g>
<g transform="translate(489.5 672.5)"><path d="M-8-8l2 2h14M-8 8h14l2-2M-6-2c2-4 8-4 10 2s-8 6-10 2" fill="none" stroke="#777" stroke-width="1.2"/><circle cx="-5" cy="-4" r="2.2" fill="#888"/><circle cx="6" cy="2" r="2.2" fill="#888"/><circle cx="-5" cy="3" r="2.2" fill="#888"/></g>
<g transform="translate(517.5 672.5)"><path d="M0-9l9 4.5v9l-9 4.5-9-4.5v-9z" fill="none" stroke="#777" stroke-width="1.4"/><path d="M-6-1l6 3 6-3v6l-6 3-6-3z" fill="#9a9a9a"/><path d="M0-9v11" stroke="#aaa" stroke-width="0.7"/></g>
<g transform="translate(489.5 699.5)"><path d="M-7-4v9h14v-9" fill="none" stroke="#666" stroke-width="1.5"/><circle cx="-7" cy="-4" r="2.4" fill="#777"/><circle cx="7" cy="-4" r="2.4" fill="#777"/><rect x="-3" y="3" width="6" height="4" fill="#999"/><path d="M-2-7l4 3-4 3z" fill="#555"/></g>
<g transform="translate(517.5 699.5)"><rect x="-6.5" y="-8.5" width="17" height="16" fill="#7a7a7a"/><rect x="-9.5" y="0.5" width="9" height="10" fill="#d0d0d0"/><path d="M7-5l-8 8M-1 -1v4h4" fill="none" stroke="#fff" stroke-width="1.8"/></g>
</svg>
<div class="a mono ctext" style="left:485px;top:102px">Create</div>
<div class="a mono ctext" style="left:482px;top:155px">Project</div>
<div class="a mono ctext" style="left:482px;top:169px">Manager</div>
<div class="a mono ctext" style="left:485px;top:183px">Create</div>

<div id="vp" class="a"></div>
<svg class="a" style="left:538px;top:98px" width="665" height="781" viewBox="538 98 665 781" shape-rendering="crispEdges">
 <rect x="538" y="98" width="665" height="781" fill="#fff"/>
 <!-- top-left border -->
 <rect x="538.5" y="98.5" width="333" height="395" fill="none" stroke="#ff0000" stroke-width="1"/>
 <rect x="877" y="98" width="326" height="1" fill="#eeeeee"/>
 <rect x="876" y="98" width="1" height="396" fill="#ececec"/>
 <rect x="538" y="498" width="1" height="381" fill="#efefef"/>
 <!-- splitters -->
 <rect x="538" y="494" width="665" height="1" fill="#5d6b98"/>
 <rect x="538" y="495" width="665" height="1" fill="#ffffff"/>
 <rect x="538" y="496" width="665" height="1" fill="#b9bcd6"/>
 <rect x="538" y="497" width="665" height="1" fill="#3b3e52"/>
 <rect x="872" y="98" width="1" height="781" fill="#646c98"/>
 <rect x="873" y="98" width="1" height="781" fill="#ffffff"/>
 <rect x="874" y="98" width="1" height="781" fill="#b9bcd6"/>
 <rect x="875" y="98" width="1" height="781" fill="#3b3e52"/>
 <!-- top-left view -->
 <rect x="589.5" y="180.5" width="231" height="231" fill="none" stroke="#808080"/>
 <rect x="609.5" y="200.5" width="191" height="191" fill="none" stroke="#ffff00"/>
 <!-- bottom-left view -->
 <rect x="589.5" y="581.5" width="231" height="230" fill="none" stroke="#808080"/>
 <rect x="609.5" y="600.5" width="191" height="192" fill="none" stroke="#ffff00"/>
 <!-- bottom-right view -->
 <rect x="927.5" y="581.5" width="231" height="230" fill="none" stroke="#808080"/>
 <rect x="947.5" y="600.5" width="191" height="192" fill="none" stroke="#ffff00"/>
 <!-- iso view -->
 <g fill="none" stroke-width="1">
  <path d="M1056.5 116.5V303.5L893.5 397.5V210.5Z" stroke="#808080"/>
  <path d="M1042.5 139.5L1178.5 217.5V374.5L1042.5 452.5L907.5 374.5V217.5Z" stroke="#ffff00"/>
  <path d="M1042.5 139.5V452.5M907.5 217.5L1178.5 374.5M1178.5 217.5L907.5 374.5" stroke="#ffff00"/>
 </g>
</svg>

<svg class="a" style="left:538px;top:98px" width="665" height="781" viewBox="538 98 665 781">
<g fill="none" stroke="#00cc00" stroke-width="1.1"><path d="M564.5 442.5L567.5 445.5L570.5 442.5M567.5 445.5V448.5"/><path d="M563.5 442.0h3M568.5 442.0h3M565.5 449.0h4"/></g>
<g fill="none" stroke="#e00000" stroke-width="1.1"><path d="M593.5 442.5L599.5 448.5M599.5 442.5L593.5 448.5"/><path d="M592.5 442.0h3M597.5 442.0h3M592.5 449.0h3M597.5 449.0h3"/></g>
<rect x="566" y="455" width="3" height="14" fill="#0000c0"/><rect x="568" y="455" width="1" height="14" fill="#000060"/>
<path d="M563 469h8l-4 5.5z" fill="#0000b0"/>
<g fill="none" stroke="#0000e0" stroke-width="1.1"><path d="M564.5 473.0h6M570.0 473.5L565.0 479.5M564.5 480.0h6"/><path d="M565.0 472.5v2M570.0 478.5v2"/></g>
<rect x="571" y="450" width="14" height="3" fill="#b00000"/><rect x="571" y="452" width="14" height="1" fill="#600000"/>
<path d="M585 448v7l6.5-3.5z" fill="#a00000"/>
<circle cx="567.1" cy="451.6" r="4.1" fill="#006000"/>
<g fill="none" stroke="#00cc00" stroke-width="1.1"><path d="M902.5 418.5L905.5 421.5L908.5 418.5M905.5 421.5V424.5"/><path d="M901.5 418.0h3M906.5 418.0h3M903.5 425.0h4"/></g>
<rect x="904" y="438" width="3" height="13" fill="#00a000"/><rect x="906" y="438" width="1" height="13" fill="#005000"/>
<path d="M901 439h8.5l-4.25-7z" fill="#00b000"/>
<path d="M905 451L889.5 460" stroke="#0000c0" stroke-width="3"/>
<path d="M888 461.5l2-7 5 4z" fill="#0000d0"/>
<path d="M906 451L921.5 460" stroke="#b00000" stroke-width="3"/>
<path d="M922.5 461.5l-2-7-5 4z" fill="#d00000"/>
<rect x="904" y="450" width="3" height="3" fill="#c8c8c8"/>
<g fill="none" stroke="#0000e0" stroke-width="1.1"><path d="M882.5 454.5h6M888.0 455L883.0 461M882.5 461.5h6"/><path d="M883.0 454v2M888.0 460v2"/></g>
<g fill="none" stroke="#e00000" stroke-width="1.1"><path d="M923.5 455L929.5 461M929.5 455L923.5 461"/><path d="M922.5 454.5h3M927.5 454.5h3M922.5 461.5h3M927.5 461.5h3"/></g>
<g fill="none" stroke="#00cc00" stroke-width="1.1"><path d="M564.5 814.5L567.5 817.5L570.5 814.5M567.5 817.5V820.5"/><path d="M563.5 814.0h3M568.5 814.0h3M565.5 821.0h4"/></g>
<g fill="none" stroke="#e00000" stroke-width="1.1"><path d="M593.5 843.5L599.5 849.5M599.5 843.5L593.5 849.5"/><path d="M592.5 843.0h3M597.5 843.0h3M592.5 850.0h3M597.5 850.0h3"/></g>
<rect x="566" y="835" width="3" height="15" fill="#00b000"/><rect x="568" y="835" width="1" height="15" fill="#005000"/>
<path d="M563 835h8.5l-4.25-6z" fill="#00b000"/>
<g fill="none" stroke="#0000e0" stroke-width="1.1"><path d="M564.5 843.5h6M570.0 844L565.0 850M564.5 850.5h6"/><path d="M565.0 843v2M570.0 849v2"/></g>
<rect x="571" y="851" width="14" height="3" fill="#b00000"/><rect x="571" y="853" width="1" height="1" fill="#600000"/>
<path d="M585 849v7l6.5-3.5z" fill="#a00000"/>
<circle cx="567.1" cy="853" r="4.1" fill="#000080"/>
<g fill="none" stroke="#00cc00" stroke-width="1.1"><path d="M902.5 814.5L905.5 817.5L908.5 814.5M905.5 817.5V820.5"/><path d="M901.5 814.0h3M906.5 814.0h3M903.5 821.0h4"/></g>
<g fill="none" stroke="#e00000" stroke-width="1.1"><path d="M902.5 843.5L908.5 849.5M908.5 843.5L902.5 849.5"/><path d="M901.5 843.0h3M906.5 843.0h3M901.5 850.0h3M906.5 850.0h3"/></g>
<rect x="904" y="835" width="3" height="15" fill="#00b000"/><rect x="906" y="835" width="1" height="15" fill="#005000"/>
<path d="M901 835h8.5l-4.25-6z" fill="#00b000"/>
<rect x="887" y="851" width="14" height="3" fill="#0000c0"/>
<path d="M887 849v7l-6.5-3.5z" fill="#0000b0"/>
<circle cx="905.1" cy="852.5" r="4.1" fill="#700000"/>
<path d="M877 843.5h2M878.5 844v2M878 848v2M877 849.5h1" stroke="#0000e0" stroke-width="1"/>
<rect x="1191.0" y="451" width="3" height="13" fill="#9a9a9a"/><rect x="1191.0" y="451" width="3" height="1" fill="#111"/><path d="M1188.5 464h8l-4 4z" fill="#777"/><path d="M1190.5 469h4v3h-4z" fill="none" stroke="#ccc" stroke-width="0.8"/>
<rect x="1191.0" y="852" width="3" height="13" fill="#9a9a9a"/><rect x="1191.0" y="852" width="3" height="1" fill="#111"/><path d="M1188.5 865h8l-4 4z" fill="#777"/><path d="M1190.5 870h4v3h-4z" fill="none" stroke="#ccc" stroke-width="0.8"/>
<rect x="853.0" y="852" width="3" height="13" fill="#9a9a9a"/><rect x="853.0" y="852" width="3" height="1" fill="#111"/><path d="M850.5 865h8l-4 4z" fill="#777"/><path d="M852.5 870h4v3h-4z" fill="none" stroke="#ccc" stroke-width="0.8"/>
<rect x="851" y="461" width="7" height="6" rx="1" fill="#d4d4d4"/><path d="M852.5 461v-3.5l1-1h2l1 1.5 1.5-1.5h1" fill="none" stroke="#d0d0d0" stroke-width="1"/><rect x="850" y="463" width="1" height="1" fill="#d4d4d4"/>
</svg>
</body></html>
